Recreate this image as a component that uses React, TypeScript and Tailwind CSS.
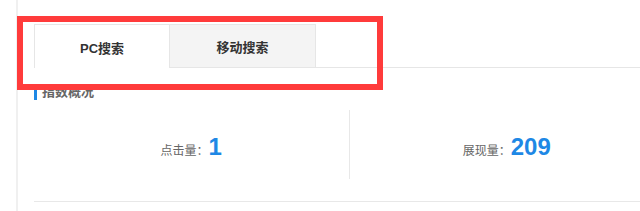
import React from "react";

const font = { fontFamily: '"Liberation Sans", "Noto Sans CJK SC", sans-serif' };

export default function App() {
  const stats = [
    { label: "点击量：", value: "1" },
    { label: "展现量：", value: "209" },
  ];

  return (
    <div className="relative h-[211px] w-[640px] overflow-hidden bg-white" style={font}>
      <div className="ml-4 h-full border-l-2 border-[#f0f0f0] pl-4 pt-6">
        {/* Tabs */}
        <div className="flex w-[630px] border-b border-[#e6e6e6]">
          <div className="-mb-px flex h-[44px] w-[136px] items-center justify-center border border-b-0 border-[#e6e6e6] bg-white pt-1 text-[13px] font-bold text-[#333]">
            PC搜索
          </div>
          <div className="flex h-[43px] w-[146px] items-center justify-center border-t border-r border-[#e6e6e6] bg-[#f4f4f4] pt-1 text-[13px] font-bold text-[#333]">
            移动搜索
          </div>
        </div>

        {/* Section title */}
        <div className="mt-4 flex h-4 items-center">
          <span className="h-4 w-[3px] bg-[#1e88e5]" />
          <span className="ml-[5px] text-[13px] font-bold leading-4 text-[#666]">指数概况</span>
        </div>

        {/* Stats */}
        <div className="mt-[10px] flex h-[69px] w-[630px]">
          {stats.map((s, i) => (
            <div
              key={s.label}
              className={`flex flex-1 items-center justify-center pt-[5px] ${i > 0 ? "border-l border-[#e8e8e8]" : ""}`}
            >
              <div className="flex items-baseline">
                <span className="text-[12px] text-[#666]">{s.label}</span>
                <span className="text-[24px] font-bold leading-none text-[#1e88e5]">{s.value}</span>
              </div>
            </div>
          ))}
        </div>
        <div className="mt-[22px] w-[630px] border-t border-[#e8e8e8]" />
      </div>

      {/* Red annotation box */}
      <div className="absolute left-[17px] top-[16px] h-[74px] w-[366px] border-[6px] border-[#ff3b3b]" />
    </div>
  );
}
